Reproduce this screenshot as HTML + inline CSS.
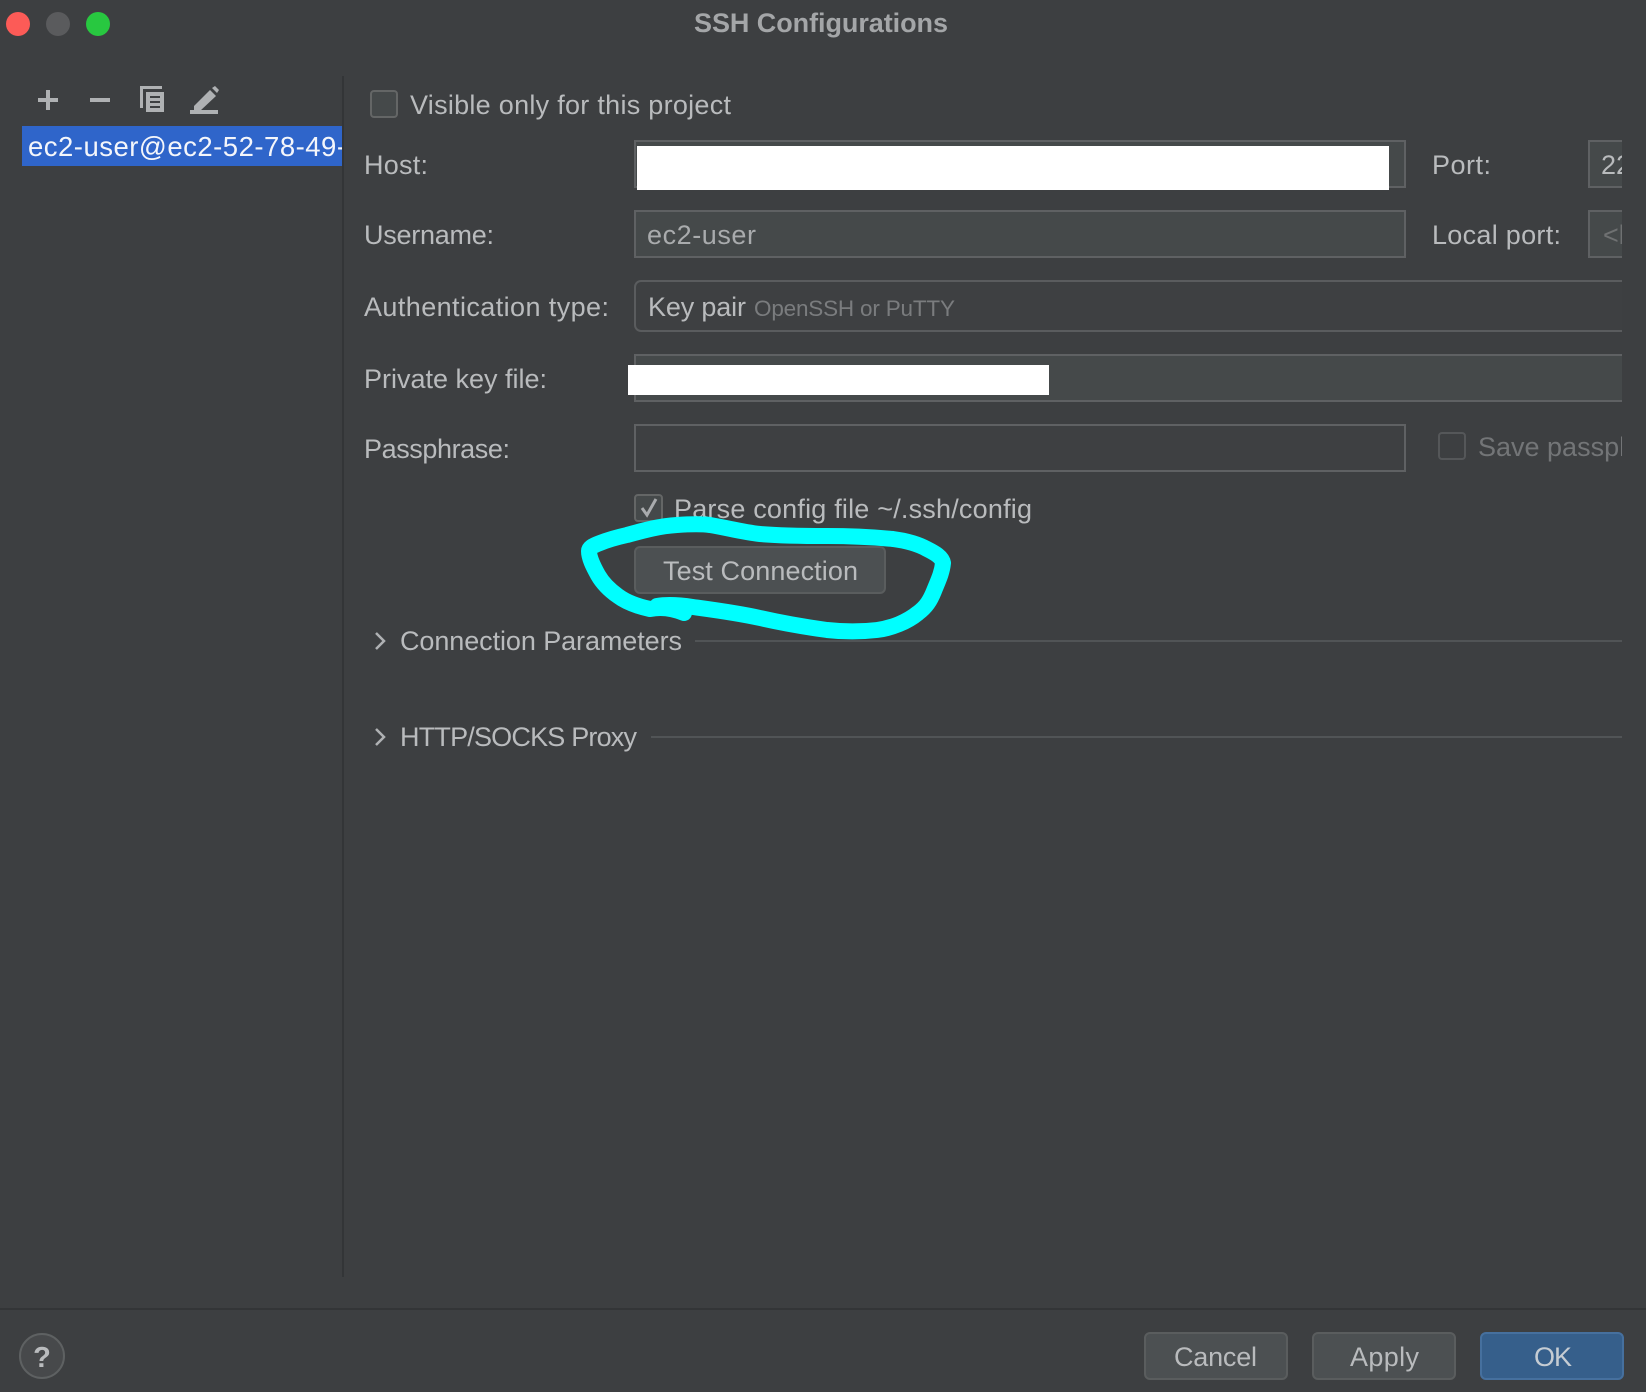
<!DOCTYPE html>
<html>
<head>
<meta charset="utf-8">
<style>
html,body{margin:0;padding:0;background:#3d3f41;width:1646px;height:1392px;overflow:hidden}
svg{display:block}
text{font-family:"Liberation Sans",sans-serif;font-size:27px;fill:#b9bbbd;white-space:pre}
.f{fill:#45494a;stroke:#5f6163;stroke-width:2}
.b{fill:#4c5052;stroke:#5a5d5e;stroke-width:2}
</style>
</head>
<body>
<svg width="1646" height="1392" viewBox="0 0 1646 1392" xmlns="http://www.w3.org/2000/svg">
<defs>
<clipPath id="ci"><rect x="22" y="126" width="320" height="40"/></clipPath>
<clipPath id="cr"><rect x="0" y="0" width="1622" height="1392"/></clipPath>
</defs>
<rect width="1646" height="1392" fill="#3d3f41"/>

<circle cx="18" cy="24" r="12" fill="#fc5b57"/>
<circle cx="58" cy="24" r="12" fill="#5a5b5d"/>
<circle cx="98" cy="24" r="12" fill="#28c840"/>
<text x="694" y="32" textLength="254" lengthAdjust="spacing" style="font-size:27px;font-weight:bold;fill:#a4a6a8">SSH Configurations</text>

<rect x="342" y="76" width="2" height="1201" fill="#333537"/>

<!-- toolbar icons -->
<path d="M38 100H58M48 90V110" stroke="#afb1b3" stroke-width="4" fill="none"/>
<path d="M90 100H110" stroke="#afb1b3" stroke-width="4" fill="none"/>
<path d="M140 86H162V89H143V108H140Z" fill="#afb1b3"/>
<path d="M146 92H164V112H146Z" fill="#afb1b3"/>
<path d="M150 97H160M150 102H160M150 107H160" stroke="#3d3f41" stroke-width="2" fill="none"/>
<path d="M194 106L210 90L216 96L200 111H194Z" fill="#afb1b3"/>
<path d="M212 88L215 86L219 90L217 93Z" fill="#afb1b3"/>
<rect x="190" y="110" width="28" height="4" fill="#afb1b3"/>

<!-- selected list item -->
<rect x="22" y="126" width="320" height="40" fill="#2f65ca"/>
<text x="28" y="156" textLength="318" lengthAdjust="spacing" clip-path="url(#ci)" style="fill:#f4f6fb;font-size:27.5px">ec2-user@ec2-52-78-49-</text>

<!-- visible checkbox -->
<rect x="371" y="91" width="26" height="26" rx="3" fill="#45494a" stroke="#646666" stroke-width="2"/>
<text x="410" y="114" textLength="321" lengthAdjust="spacing">Visible only for this project</text>

<!-- labels -->
<text x="364" y="174" textLength="64" lengthAdjust="spacing">Host:</text>
<text x="364" y="244" textLength="130" lengthAdjust="spacing">Username:</text>
<text x="364" y="316" textLength="245" lengthAdjust="spacing">Authentication type:</text>
<text x="364" y="388" textLength="183" lengthAdjust="spacing">Private key file:</text>
<text x="364" y="458" textLength="146" lengthAdjust="spacing">Passphrase:</text>

<g clip-path="url(#cr)">
<!-- fields -->
<rect class="f" x="635" y="141" width="770" height="46"/>
<rect class="f" x="635" y="211" width="770" height="46"/>
<rect x="635" y="281" width="1040" height="50" rx="6" fill="#3e4042" stroke="#5a5c5e" stroke-width="2"/>
<rect class="f" x="635" y="355" width="1040" height="46"/>
<rect x="635" y="425" width="770" height="46" fill="#3e4042" stroke="#5f6163" stroke-width="2"/>
<rect class="f" x="1589" y="141" width="80" height="46"/>
<rect class="f" x="1589" y="211" width="80" height="46"/>

<text x="1601" y="174" style="font-size:27px">22</text>
<text x="1603" y="244" style="fill:#6f7172">&lt;local</text>
<text x="1432" y="174" textLength="59" lengthAdjust="spacing">Port:</text>
<text x="1432" y="244" textLength="129" lengthAdjust="spacing">Local port:</text>
<rect x="1439" y="433" width="26" height="26" rx="3" fill="none" stroke="#555759" stroke-width="2"/>
<text x="1478" y="456" style="fill:#737577">Save passphrase</text>

<text x="647" y="244" textLength="109" lengthAdjust="spacing" style="fill:#a9abad">ec2-user</text>
<text x="648" y="316" textLength="98" lengthAdjust="spacing">Key pair</text>
<text x="754" y="316" textLength="201" lengthAdjust="spacing" style="font-size:22.5px;fill:#7a7c7e">OpenSSH or PuTTY</text>

<!-- section lines -->
<rect x="695" y="640" width="927" height="2" fill="#515456"/>
<rect x="651" y="736" width="971" height="2" fill="#515456"/>
</g>

<!-- white redactions -->
<rect x="637" y="146" width="752" height="44" fill="#fff"/>
<rect x="628" y="365" width="421" height="30" fill="#fff"/>

<!-- parse checkbox -->
<rect x="635" y="495" width="27" height="26" rx="3" fill="#45494a" stroke="#646666" stroke-width="2"/>
<path d="M642 508L647 515L656 499" fill="none" stroke="#a9abad" stroke-width="3"/>
<text x="674" y="518" textLength="358" lengthAdjust="spacing">Parse config file ~/.ssh/config</text>

<!-- test connection -->
<rect class="b" x="635" y="547" width="250" height="46" rx="5"/>
<text x="663" y="580" textLength="195" lengthAdjust="spacing">Test Connection</text>

<!-- sections -->
<path d="M376 633L384 641L376 649" fill="none" stroke="#afb1b3" stroke-width="2.5"/>
<text x="400" y="650" textLength="282" lengthAdjust="spacing">Connection Parameters</text>
<path d="M376 729L384 737L376 745" fill="none" stroke="#afb1b3" stroke-width="2.5"/>
<text x="400" y="746" textLength="237" lengthAdjust="spacing">HTTP/SOCKS Proxy</text>

<!-- cyan highlight -->
<path d="M684 613C672 608 660 607 650 609C636 606 626 602 618 596C608 589 602 582 598 575C593 566 589 558 589 551C589 548 592 546 600 543C610 539 618 537 627 535C645 530 660 526 677 525C692 524 702 524 710 525C728 528 742 532 760 534C782 536 805 536 827 536C850 536 872 537 893 539C908 541 918 544 927 549C935 553 942 557 943 563C942 573 938 581 934 591C930 601 926 607 918 613C907 622 892 628 877 630C860 632 845 632 827 630C805 627 782 623 760 618C738 613 715 610 693 607C680 605 668 604 657 606" fill="none" stroke="#00ffff" stroke-width="16" stroke-linecap="round" stroke-linejoin="round"/>

<!-- footer -->
<rect x="0" y="1308" width="1646" height="2" fill="#333537"/>
<circle cx="42" cy="1356" r="22" fill="#47494b" stroke="#5e6162" stroke-width="2"/>
<text x="42" y="1367" text-anchor="middle" style="font-size:29px;font-weight:bold;fill:#b9bbbd">?</text>

<rect class="b" x="1145" y="1333" width="142" height="46" rx="5"/>
<text x="1174" y="1366" textLength="83" lengthAdjust="spacing">Cancel</text>
<rect class="b" x="1313" y="1333" width="142" height="46" rx="5"/>
<text x="1350" y="1366" textLength="69" lengthAdjust="spacing">Apply</text>
<rect x="1481" y="1333" width="142" height="46" rx="5" fill="#365f8b" stroke="#46709e" stroke-width="2"/>
<text x="1534" y="1366" textLength="38" lengthAdjust="spacing" style="fill:#c5ccd3">OK</text>
</svg>
</body>
</html>
